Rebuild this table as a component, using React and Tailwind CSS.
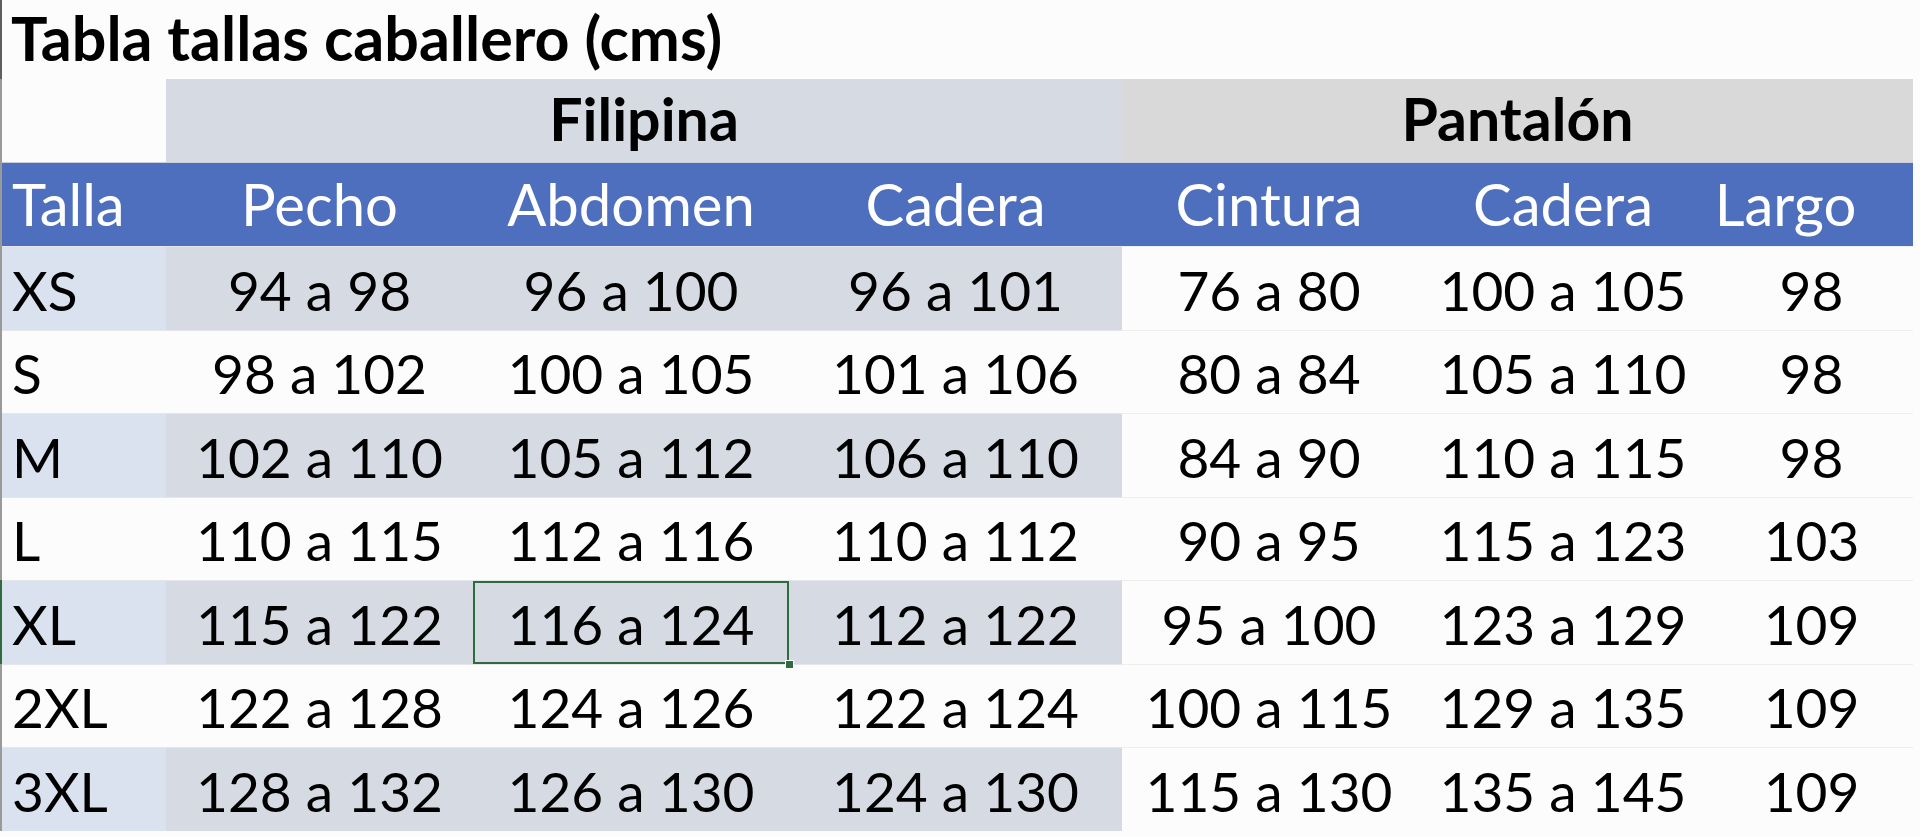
import React from 'react';

const cols = 'grid grid-cols-[164px_307px_316px_333px_294px_294px_203px]';

const rows = [
  ['XS', '94 a 98', '96 a 100', '96 a 101', '76 a 80', '100 a 105', '98'],
  ['S', '98 a 102', '100 a 105', '101 a 106', '80 a 84', '105 a 110', '98'],
  ['M', '102 a 110', '105 a 112', '106 a 110', '84 a 90', '110 a 115', '98'],
  ['L', '110 a 115', '112 a 116', '110 a 112', '90 a 95', '115 a 123', '103'],
  ['XL', '115 a 122', '116 a 124', '112 a 122', '95 a 100', '123 a 129', '109'],
  ['2XL', '122 a 128', '124 a 126', '122 a 124', '100 a 115', '129 a 135', '109'],
  ['3XL', '128 a 132', '126 a 130', '124 a 130', '115 a 130', '135 a 145', '109'],
];

const Cell = ({ children, className = '' }) => (
  <div className={`flex items-end justify-center pb-[7px] leading-[1.2] ${className}`}>{children}</div>
);

export default function App() {
  return (
    <div className="min-h-screen w-full bg-[#fcfcfc] text-black font-['Lato','Open_Sans',sans-serif] text-[55px]">
      {/* title */}
      <div className="h-[79px] flex items-end pb-[5px] pl-[9px] border-l-2 border-[#5f5f5f]">
        <h1 className="font-bold text-[61px] leading-[1.2]">Tabla tallas caballero (cms)</h1>
      </div>

      {/* group header */}
      <div className={`${cols} h-[83px] font-bold border-l-2 border-[#9a9a9a]`}>
        <div />
        <Cell className="col-span-3 bg-[#d6dbe3] text-[59px] pb-[5px]">Filipina</Cell>
        <Cell className="col-span-3 bg-[#d9d9d9] text-[59px] pb-[5px]">Pantalón</Cell>
      </div>

      {/* column header */}
      <div className={`${cols} h-[84px] text-white text-[58px] border-l-2 border-[#9a9a9a]`}>
        <Cell className="bg-[#4d6fbd] justify-start pl-[10px] pb-[6px] border-t border-[#c9d0dc]">Talla</Cell>
        {['Pecho', 'Abdomen', 'Cadera', 'Cintura', 'Cadera'].map((h, i) => (
          <Cell key={i} className="bg-[#4d6fbd] pb-[6px] border-t border-[#c9d0dc]">{h}</Cell>
        ))}
        <Cell className="bg-[#4d6fbd] pb-[6px] border-t border-[#c9d0dc] pr-[52px]">Largo</Cell>
      </div>

      {/* data */}
      {rows.map((r, idx) => {
        const shaded = idx % 2 === 0;
        const sel = r[0] === 'XL';
        return (
          <div
            key={r[0]}
            className={`${cols} h-[83.5px] border-l-2 ${sel ? 'border-[#2f6b3f]' : 'border-[#9a9a9a]'}`}
          >
            <Cell className={`justify-start pl-[10px] border-t border-[#e4e6ea] ${shaded ? 'bg-[#dae1ef]' : ''}`}>{r[0]}</Cell>
            {r.slice(1, 4).map((v, i) => (
              <Cell
                key={i}
                className={`relative border-t border-[#e4e6ea] ${shaded ? 'bg-[#d6dbe3]' : ''}`}
              >
                {v}
                {sel && i === 1 && (
                  <>
                    <span className="absolute inset-0 border-2 border-[#2f6b3f] pointer-events-none" />
                    <span className="absolute z-10 -bottom-[5px] -right-[5px] w-[9px] h-[9px] bg-[#2f6b3f] border border-white" />
                  </>
                )}
              </Cell>
            ))}
            {r.slice(4).map((v, i) => (
              <Cell key={i} className="relative border-t border-[#eeeeee]">{v}</Cell>
            ))}
          </div>
        );
      })}
    </div>
  );
}
